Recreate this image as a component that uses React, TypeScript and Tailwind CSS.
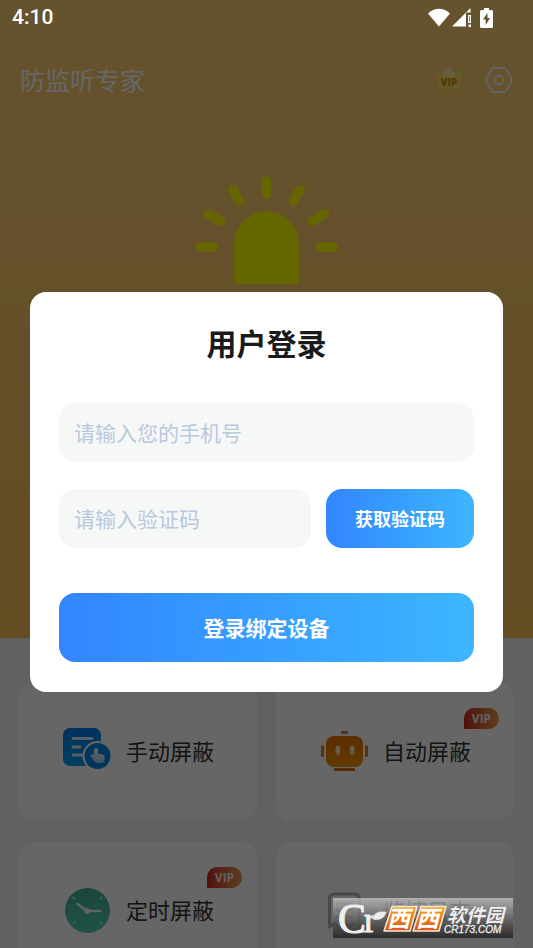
import type { ReactNode } from "react";

function StatusBar() {
  return (
    <div className="flex h-9 shrink-0 items-center justify-between pr-10 pl-3 text-white">
      <time className="font-['Roboto',sans-serif] text-[21px] font-medium">4:10</time>
      <div className="flex items-center" aria-hidden="true">
        <svg width="22" height="20" viewBox="0 0 22 20" fill="currentColor">
          <path d="M11 18.500 0 5.500C6-1 16-1 22 5.500Z" />
        </svg>
        <svg className="ml-0.5" width="20" height="20" viewBox="0 0 20 20" fill="currentColor">
          <path d="M0 18.500 18.500 0v4.500h-4.500v14Z" />
          <path fillRule="evenodd" d="M16 7h3v8h-3zM17.200 8.200v5.600h.8v-5.600zM16.500 16.500h2.500v2.500h-2.500z" />
        </svg>
        <svg className="ml-2" width="13" height="20" viewBox="0 0 13 20" fill="currentColor">
          <path
            fillRule="evenodd"
            d="M4 0h5v2h2.500Q13 2 13 3.500V18.500Q13 20 11.500 20H1.500Q0 20 0 18.500V3.500Q0 2 1.500 2H4ZM7.500 5 3 11.500h2.700V17L10 10H7.500Z"
          />
        </svg>
      </div>
    </div>
  );
}

function CrownIcon() {
  return (
    <svg width="28" height="30" viewBox="0 0 28 30" aria-hidden="true">
      <path d="M1 5q0-2 2-1l5 4 6-6 6 6 5-4q2-1 2 1l-2 15q-.5 4-4 4H7q-3.500 0-4-4Z" fill="#fbdf66" />
      <path d="M7 8 12 2q2-2 4 0l5 6-2 5H9Z" fill="#fff" opacity=".3" />
      <rect x="3" y="26" width="22" height="2" rx="1" fill="#f6e23c" />
      <text x="14" y="21" textAnchor="middle" fontFamily="Open Sans, sans-serif" fontSize="10" fontWeight="800" fill="#dc9000">
        VIP
      </text>
    </svg>
  );
}

function SettingsIcon() {
  return (
    <svg width="28" height="28" viewBox="0 0 28 28" fill="none" stroke="#f4f4f4" strokeWidth="2" aria-hidden="true">
      <path
        strokeLinejoin="round"
        d="M9 2h10q1.500 0 2.300 1.400l5 9q.8 1.600 0 3.200l-5 9Q20.500 26 19 26H9q-1.500 0-2.300-1.400l-5-9q-.8-1.600 0-3.200l5-9Q7.500 2 9 2Z"
      />
      <circle cx="14" cy="14" r="4.200" />
    </svg>
  );
}

function AlarmLight() {
  return (
    <svg width="144" height="109" viewBox="0 0 144 109" aria-hidden="true">
      <path d="M39 68a32.500 33 0 0 1 65 0v36q0 4-4 4H43q-4 0-4-4Z" fill="#ff0" />
      <path
        d="M5 71h13M13.500 38l12 7M38 13.500l6.500 11.500M71.500 5v13.500M98.500 25 105 13.500M117.500 45l12-7M125 71h13"
        stroke="#ff0"
        strokeWidth="9.500"
        strokeLinecap="round"
      />
    </svg>
  );
}

function ManualIcon() {
  return (
    <svg width="48" height="48" viewBox="0 0 48 48" aria-hidden="true">
      <defs>
        <linearGradient id="manual" x1="0" y1="0" x2="0" y2="1">
          <stop offset="0" stopColor="#007be8" />
          <stop offset="1" stopColor="#00a0ee" />
        </linearGradient>
        <linearGradient id="hand" x1="0" y1="0" x2="0" y2="1">
          <stop offset="0" stopColor="#fff" />
          <stop offset="1" stopColor="#9ccdf5" />
        </linearGradient>
      </defs>
      <rect y="1" width="38" height="38" rx="7" fill="url(#manual)" />
      <path d="M10 11.500h19M10 20h7M10 28h9" stroke="#d6edfc" strokeWidth="3" strokeLinecap="round" />
      <circle cx="34.500" cy="29" r="15" fill="#fff" />
      <circle cx="34.500" cy="29" r="13" fill="#0087e6" />
      <path
        d="M31 23q0-2 2-2t2 2v3.500l5 1.200q1.500.5 1.500 2v3q0 3-3 3.300h-4q-2 0-3.200-1.700l-3.500-4.800q-.8-1.500.7-2t2.500.8Z"
        fill="url(#hand)"
      />
    </svg>
  );
}

function RobotIcon() {
  return (
    <svg width="48" height="48" viewBox="0 0 48 48" aria-hidden="true">
      <defs>
        <linearGradient id="robot" x1="0" y1="0" x2="0" y2="1">
          <stop offset="0" stopColor="#e87200" />
          <stop offset="1" stopColor="#f09000" />
        </linearGradient>
        <linearGradient id="eye" x1="0" y1="0" x2="0" y2="1">
          <stop offset="0" stopColor="#fff" />
          <stop offset="1" stopColor="#fcc98a" />
        </linearGradient>
      </defs>
      <rect x="21" y="4" width="7" height="3" rx="1" fill="#e07a20" />
      <rect x="1" y="18" width="3" height="12" rx="1.500" fill="#e07a20" />
      <rect x="45" y="18" width="3" height="12" rx="1.500" fill="#e07a20" />
      <rect x="14" y="41" width="21" height="3" rx="1" fill="#d56a18" />
      <rect x="6" y="9" width="37" height="31" rx="8" fill="url(#robot)" />
      <rect x="15.500" y="19" width="4.500" height="9" rx="2.200" fill="url(#eye)" />
      <rect x="30" y="19" width="4.500" height="9" rx="2.200" fill="url(#eye)" />
    </svg>
  );
}

function ClockIcon() {
  return (
    <svg width="48" height="48" viewBox="0 0 48 48" fill="none" strokeLinecap="round" aria-hidden="true">
      <defs>
        <linearGradient id="clock" x1="0" y1="0" x2="0" y2="1">
          <stop offset="0" stopColor="#3fae98" />
          <stop offset="1" stopColor="#54cbae" />
        </linearGradient>
      </defs>
      <circle cx="24.500" cy="24.500" r="22.500" fill="url(#clock)" />
      <path d="m10 11 2 2M39 11l-2 2M10 38l2-2M39 38l-2-2" stroke="#8fdcc8" strokeWidth="2" />
      <path d="M14.500 18 24 25h13" stroke="#e8faf5" strokeWidth="2.500" strokeLinejoin="round" />
      <circle cx="24" cy="25" r="3" fill="#e8faf5" />
    </svg>
  );
}

function LogIcon() {
  return (
    <svg width="48" height="48" viewBox="0 0 48 48" fill="none" stroke="#b4b4b4" strokeWidth="3" aria-hidden="true">
      <path strokeLinejoin="round" d="M9.500 41V13q0-5 5-5h20q5 0 5 5v28l-5-4-5 4-5-4-5 4-5-4Z" />
      <path d="M16 17h17M16 24h17M16 31h17" />
    </svg>
  );
}

type Feature = { label: string; icon: ReactNode; vip?: boolean };

const features: Feature[] = [
  { label: "手动屏蔽", icon: <ManualIcon /> },
  { label: "自动屏蔽", icon: <RobotIcon />, vip: true },
  { label: "定时屏蔽", icon: <ClockIcon />, vip: true },
  { label: "监控日志", icon: <LogIcon /> },
];

function FeatureCard({ label, icon, vip }: Feature) {
  return (
    <button
      type="button"
      className="relative flex h-[137px] items-center justify-center gap-[15px] rounded-2xl bg-white pb-0.5 pl-px text-[22px] text-[#333]"
    >
      {icon}
      <span>{label}</span>
      {vip && (
        <span className="absolute top-[25px] right-[15px] flex h-[21px] w-[35px] items-center justify-center rounded-t-[10px] rounded-br-[10px] bg-linear-to-r from-[#c8251c] to-[#e89a4c] font-['Open_Sans',sans-serif] text-[12px] font-bold text-[#f4f4f4]">
          VIP
        </span>
      )}
    </button>
  );
}

function LoginDialog() {
  const field =
    "h-[59px] min-w-0 rounded-2xl bg-[#f6f8f8] px-[15px] pb-0.5 text-[21px] text-[#1a1a1a] outline-none placeholder:text-[#b9c8dd]";
  return (
    <form
      role="dialog"
      aria-labelledby="login-title"
      className="flex w-full flex-col rounded-2xl bg-white px-[29px] pt-7 pb-[30px]"
    >
      <h2 id="login-title" className="text-center text-[30px] leading-[45px] font-bold text-[#1a1a1a]">
        用户登录
      </h2>
      <input type="tel" aria-label="手机号" placeholder="请输入您的手机号" className={`${field} mt-[38px]`} />
      <div className="mt-[27px] flex gap-[15px]">
        <input type="text" aria-label="验证码" placeholder="请输入验证码" className={`${field} flex-1`} />
        <button
          type="button"
          className="h-[59px] w-[148px] rounded-2xl bg-linear-to-r from-[#3385ff] to-[#3db6ff] text-[18px] font-bold text-white"
        >
          获取验证码
        </button>
      </div>
      <button
        type="submit"
        className="mt-[45px] h-[69px] rounded-2xl bg-linear-to-r from-[#3385ff] to-[#3db6ff] text-[21px] font-bold text-white"
      >
        登录绑定设备
      </button>
    </form>
  );
}

function SiteMark() {
  return (
    <div className="absolute right-5 bottom-2.5 h-10 w-[180px] bg-linear-to-b from-[#d0d0d0]/70 to-[#141414]/70">
      <svg
        className="overflow-visible"
        width="180"
        height="40"
        viewBox="0 0 180 40"
        role="img"
        aria-label="西西软件园 CR173.COM"
      >
        <defs>
          <linearGradient id="tile" x1="0" y1="0" x2="0" y2="1">
            <stop offset="0" stopColor="#f2a71f" />
            <stop offset="1" stopColor="#e2501a" />
          </linearGradient>
        </defs>
        <g fontFamily="Liberation Serif, serif" fill="#eee" stroke="#eee" strokeWidth="1">
          <text x="5" y="35" fontSize="42">
            C
          </text>
          <text x="31" y="34" fontSize="36">
            r
          </text>
        </g>
        <path d="M39 21q3-10 15-7-4 9-12 8Z" fill="#eee" stroke="#888" strokeWidth=".5" />
        <g fill="url(#tile)" stroke="#f6ead8" strokeWidth="1.500" strokeLinejoin="round">
          <path d="M59 8.500h25L77 33H51Z" />
          <path d="M88 8.500h25L106 33H80Z" />
        </g>
        <g fontFamily="Noto Sans CJK SC, sans-serif" fontWeight="700" fontStyle="italic" fill="#fff">
          <text x="54" y="29" fontSize="23">
            西
          </text>
          <text x="83" y="29" fontSize="23">
            西
          </text>
          <text x="114" y="24" fontSize="19" fill="#eee" stroke="#666" strokeWidth="1" paintOrder="stroke">
            软件园
          </text>
        </g>
        <text
          x="111"
          y="35"
          fontFamily="Liberation Sans, sans-serif"
          fontSize="10"
          fontStyle="italic"
          fill="#eee"
          stroke="#eee"
          strokeWidth=".3"
        >
          CR173.COM
        </text>
      </svg>
    </div>
  );
}

export default function App() {
  return (
    <div className="relative h-screen overflow-hidden bg-[#f3f3f3] font-['Noto_Sans_CJK_SC',sans-serif]">
      <main>
        <section className="flex h-[638px] flex-col items-center bg-linear-to-b from-[#fdd074] to-[#f9bd58] pt-9">
          <header className="flex h-[88px] w-full items-center justify-between px-5">
            <h1 className="text-[25px] text-white">防监听专家</h1>
            <div className="flex items-center gap-[22px]">
              <button type="button" aria-label="VIP">
                <CrownIcon />
              </button>
              <button type="button" aria-label="设置">
                <SettingsIcon />
              </button>
            </div>
          </header>
          <div className="mt-[52px]">
            <AlarmLight />
          </div>
        </section>
        <section className="grid grid-cols-2 gap-x-[19px] gap-y-[22px] px-[19px] pt-[45px]">
          {features.map((f) => (
            <FeatureCard key={f.label} {...f} />
          ))}
        </section>
      </main>

      <div className="absolute inset-0 flex flex-col bg-black/60">
        <StatusBar />
        <div className="flex flex-1 items-center px-[30px]">
          <LoginDialog />
        </div>
      </div>

      <SiteMark />
    </div>
  );
}
